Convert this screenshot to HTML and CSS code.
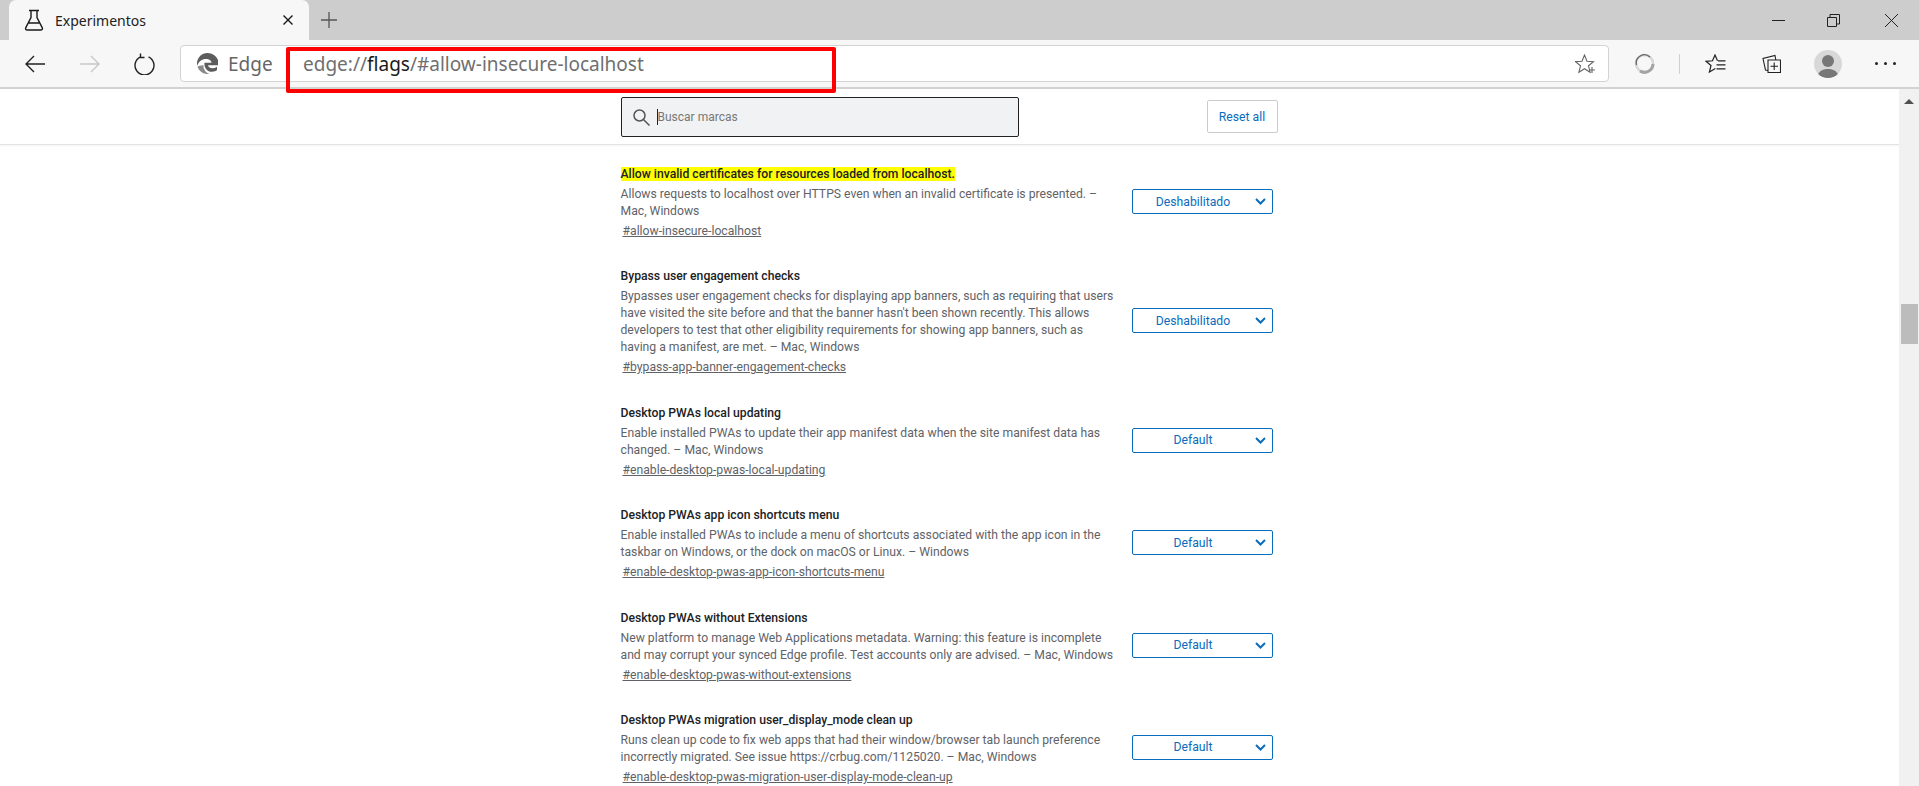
FILE: index.html
```html
<!DOCTYPE html>
<html lang="es">
<head>
<meta charset="utf-8">
<title>Experimentos</title>
<link rel="stylesheet" href="styles.css">
</head>
<body>
<div class="browser">
  <div class="tabstrip">
    <div class="tab">
      <svg class="flask" width="20" height="22" viewBox="0 0 20 22" fill="none" stroke="#1a1a1a" stroke-width="1.4"><path d="M5 1.500h10M7 1.500v7L1.800 18.600c-.7 1.300.1 2.400 1.400 2.400h13.600c1.300 0 2.100-1.100 1.400-2.400L13 8.500v-7M4.800 14h10.400"/></svg>
      <span class="tab-title">Experimentos</span>
      <svg class="tab-close" width="10" height="10" viewBox="0 0 10 10" stroke="#111" stroke-width="1.300"><path d="M.5.5l9 9M9.500.5l-9 9"/></svg>
    </div>
    <svg class="new-tab" width="16" height="16" viewBox="0 0 16 16" stroke="#555" stroke-width="1.300"><path d="M8 0v16M0 8h16"/></svg>
    <div class="win-controls">
      <svg class="win-min" width="13" height="13" viewBox="0 0 13 13" stroke="#222" stroke-width="1"><path d="M0 6.500h13"/></svg>
      <svg width="13" height="13" viewBox="0 0 13 13" fill="none" stroke="#222" stroke-width="1"><path d="M.5 3.500h9v9h-9zM3 3.500V.5h9.500v9.500h-3"/></svg>
      <svg width="13" height="13" viewBox="0 0 13 13" stroke="#222" stroke-width="1"><path d="M0 0l13 13M13 0L0 13"/></svg>
    </div>
  </div>

  <div class="toolbar">
    <svg class="nav back" width="20" height="18" viewBox="0 0 20 18" fill="none" stroke="#222" stroke-width="1.400"><path d="M20 9H1M9 1L1 9l8 8"/></svg>
    <svg class="nav forward" width="20" height="18" viewBox="0 0 20 18" fill="none" stroke="#c8c8c8" stroke-width="1.400"><path d="M0 9h19M11 1l8 8-8 8"/></svg>
    <svg class="nav reload" width="21" height="22" viewBox="0 0 21 22" fill="none" stroke="#222" stroke-width="1.400"><path d="M6.500 3.800A9.500 9.500 0 1 0 14.500 3.800M6.500 .5v4h4"/></svg>
    <div class="address">
      <svg class="edge-logo" width="21" height="21" viewBox="0 0 21 21"><path fill="#5d5d5d" d="M10.500 0C4.700 0 0 4.700 0 10.500c0 1 .1 1.700.3 2.300C1.500 8.500 5 6 9 6c3.200 0 5.500 1.700 5.500 3.800H7.500c-.6 4.500 2.500 9 7.500 9 2.300 0 4-.8 5-1.700v-3.300c-1.500 1-3 1.500-4.500 1.500-3 0-4.200-1.500-4.500-3h10.400c.2-.6.300-1.500.3-2.400C21 4.200 16.300 0 10.500 0z"/><path fill="#8a8a8a" d="M.5 13.500C1.700 17.800 5.700 21 10.500 21c.6 0 1.200 0 1.800-.2C8.500 19.500 6 15.800 6.500 12 3.500 12.500 1.500 13 .5 13.500z"/></svg>
      <span class="edge-label">Edge</span>
      <span class="url">edge://<b>flags</b>/#allow-insecure-localhost</span>
      <svg class="fav-add" width="21" height="20" viewBox="0 0 21 20" fill="none" stroke="#666" stroke-width="1.100"><path d="M9.500 1l2.500 6.200 6.500.4-5 4.200 1.600 6.400-5.600-3.500-5.600 3.500 1.600-6.400-5-4.200 6.500-.4z"/><path d="M17 13v6M14 16h6"/></svg>
    </div>
    <svg class="tool sync" width="21" height="21" viewBox="0 0 21 21" fill="none"><circle cx="10.500" cy="10.500" r="8.500" stroke="#d6d6d6" stroke-width="2.500"/><path d="M19 11a8.500 8.500 0 0 1-13 7" stroke="#a3a3a3" stroke-width="3"/><path d="M2.500 12A8.200 8.200 0 0 1 16 4" stroke="#666" stroke-width="1.300"/></svg>
    <span class="sep"></span>
    <svg class="tool favs" width="21" height="20" viewBox="0 0 21 20" fill="none" stroke="#222" stroke-width="1.200"><path d="M12.500 6.800L10 1 7.500 6.800 1 7.300l5 4.200L4.400 18l6-3.500"/><path d="M13 6.800h7.500M11.500 10.800h9M11.500 14.800h9"/></svg>
    <svg class="tool colls" width="19" height="20" viewBox="0 0 19 20" fill="none" stroke="#222" stroke-width="1.100"><path d="M6 18.500h12.500V6H6zM12.200 8.500v7.500M8.500 12.200H16"/><path d="M6 16.500L3.500 16 1 4.500 13 1.500l.8 4.500"/></svg>
    <div class="avatar"><svg width="28" height="28" viewBox="0 0 28 28"><circle cx="14" cy="11" r="6" fill="#777"/><path fill="#777" d="M3.500 26c1-4.500 5-7 10.500-7s9.500 2.500 10.500 7c-2.500 1.500-6.500 2-10.500 2s-8-.5-10.500-2z"/></svg></div>
    <div class="more"><i></i><i></i><i></i></div>
  </div>

  <div class="viewport">
    <main class="page">
      <header class="page-head">
        <div class="head-inner">
          <div class="search">
            <svg width="17" height="17" viewBox="0 0 17 17" fill="none" stroke="#555" stroke-width="1.500"><circle cx="6.500" cy="6.500" r="5.500"/><path d="M10.500 10.500l6 6"/></svg>
            <span class="caret"></span><span class="placeholder">Buscar marcas</span>
          </div>
          <button class="reset">Reset all</button>
        </div>
      </header>
      <section class="list">
        <article class="exp">
          <div class="exp-text">
            <h3><mark>Allow invalid certificates for resources loaded from localhost.</mark></h3>
            <p>Allows requests to localhost over HTTPS even when an invalid certificate is presented. – Mac, Windows</p>
            <a>#allow-insecure-localhost</a>
          </div>
          <div class="select">Deshabilitado<svg width="11" height="7" viewBox="0 0 11 7" fill="none" stroke="#0a6cbd" stroke-width="2"><path d="M1 1l4.500 4.500L10 1"/></svg></div>
        </article>
        <article class="exp">
          <div class="exp-text">
            <h3>Bypass user engagement checks</h3>
            <p>Bypasses user engagement checks for displaying app banners, such as requiring that users have visited the site before and that the banner hasn't been shown recently. This allows developers to test that other eligibility requirements for showing app banners, such as having a manifest, are met. – Mac, Windows</p>
            <a>#bypass-app-banner-engagement-checks</a>
          </div>
          <div class="select">Deshabilitado<svg width="11" height="7" viewBox="0 0 11 7" fill="none" stroke="#0a6cbd" stroke-width="2"><path d="M1 1l4.500 4.500L10 1"/></svg></div>
        </article>
        <article class="exp">
          <div class="exp-text">
            <h3>Desktop PWAs local updating</h3>
            <p>Enable installed PWAs to update their app manifest data when the site manifest data has changed. – Mac, Windows</p>
            <a>#enable-desktop-pwas-local-updating</a>
          </div>
          <div class="select">Default<svg width="11" height="7" viewBox="0 0 11 7" fill="none" stroke="#0a6cbd" stroke-width="2"><path d="M1 1l4.500 4.500L10 1"/></svg></div>
        </article>
        <article class="exp">
          <div class="exp-text">
            <h3>Desktop PWAs app icon shortcuts menu</h3>
            <p>Enable installed PWAs to include a menu of shortcuts associated with the app icon in the taskbar on Windows, or the dock on macOS or Linux. – Windows</p>
            <a>#enable-desktop-pwas-app-icon-shortcuts-menu</a>
          </div>
          <div class="select">Default<svg width="11" height="7" viewBox="0 0 11 7" fill="none" stroke="#0a6cbd" stroke-width="2"><path d="M1 1l4.500 4.500L10 1"/></svg></div>
        </article>
        <article class="exp">
          <div class="exp-text">
            <h3>Desktop PWAs without Extensions</h3>
            <p>New platform to manage Web Applications metadata. Warning: this feature is incomplete and may corrupt your synced Edge profile. Test accounts only are advised. – Mac, Windows</p>
            <a>#enable-desktop-pwas-without-extensions</a>
          </div>
          <div class="select">Default<svg width="11" height="7" viewBox="0 0 11 7" fill="none" stroke="#0a6cbd" stroke-width="2"><path d="M1 1l4.500 4.500L10 1"/></svg></div>
        </article>
        <article class="exp">
          <div class="exp-text">
            <h3>Desktop PWAs migration user_display_mode clean up</h3>
            <p>Runs clean up code to fix web apps that had their window/browser tab launch preference incorrectly migrated. See issue https://crbug.com/1125020. – Mac, Windows</p>
            <a>#enable-desktop-pwas-migration-user-display-mode-clean-up</a>
          </div>
          <div class="select">Default<svg width="11" height="7" viewBox="0 0 11 7" fill="none" stroke="#0a6cbd" stroke-width="2"><path d="M1 1l4.500 4.500L10 1"/></svg></div>
        </article>
      </section>
    </main>
    <div class="scrollbar"><span class="arrow"></span><span class="thumb"></span></div>
  </div>
  <div class="callout"></div>
</div>
</body>
</html>
```
FILE: styles.css
```css
* { box-sizing: border-box; }
html, body { margin: 0; height: 100%; overflow: hidden; }
body { font-family: Roboto, "Liberation Sans", sans-serif; background: #fff; color: #222; }
.browser { position: relative; height: 786px; display: flex; flex-direction: column; overflow: hidden; }

.tabstrip { height: 40px; flex: none; background: #cdcdcd; display: flex; align-items: center; padding-left: 9px; }
.tab { width: 300px; height: 40px; background: #f7f7f7; border-radius: 7px 7px 0 0; display: flex; align-items: center; padding-left: 15px; }
.flask { flex: none; }
.tab-title { margin-left: 11px; font: 14px "Noto Sans", "Open Sans", sans-serif; color: #222; flex: 1; }
.tab-close { margin-right: 16px; flex: none; }
.new-tab { margin-left: 12px; }
.win-controls { margin-left: auto; display: flex; gap: 45px; padding-right: 21px; align-items: center; }
.win-min { margin-right: -3px; }

.toolbar { height: 49px; flex: none; background: #f7f7f7; border-bottom: 2px solid #d2d2d2; display: flex; align-items: center; }
.nav { flex: none; }
.back { margin-left: 25px; }
.forward { margin-left: 35px; }
.reload { margin-left: 34px; }
.address { margin-left: 25px; width: 1429px; height: 37px; background: #fff; border: 1px solid #d3d3d3; border-radius: 4px; display: flex; align-items: center; padding-left: 16px; padding-right: 12px; }
.edge-logo { flex: none; }
.edge-label { margin-left: 10px; font: 19px "Noto Sans", "Open Sans", sans-serif; color: #666; width: 75px; flex: none; }
.url { font: 19px "Noto Sans", "Open Sans", sans-serif; color: #6f6f6f; flex: 1; white-space: nowrap; }
.url b { font-weight: 400; color: #1a1a1a; }
.fav-add { flex: none; }
.tool { flex: none; }
.sync { margin-left: 25px; }
.sep { width: 1px; height: 20px; background: #cfcfcf; margin-left: 24px; flex: none; }
.favs { margin-left: 25px; }
.colls { margin-left: 36px; }
.avatar { width: 28px; height: 28px; border-radius: 50%; background: #d8d8d8; margin-left: 33px; overflow: hidden; flex: none; }
.avatar svg { display: block; }
.more { margin-left: 33px; display: flex; gap: 6px; flex: none; }
.more i { width: 3px; height: 3px; border-radius: 50%; background: #222; display: block; }

.viewport { flex: 1; min-height: 0; display: flex; }
.page { flex: 1; min-width: 0; overflow: hidden; }
.page-head { height: 56px; border-bottom: 1px solid #e3e3e3; box-shadow: 0 1px 2px rgba(0,0,0,.05); }
.head-inner { width: 658px; margin: 0 auto; display: flex; align-items: flex-start; justify-content: space-between; }
.search { margin-top: 8px; width: 398px; height: 40px; background: #f1f2f3; border: 1px solid #222; border-radius: 2px; display: flex; align-items: center; padding-left: 11px; }
.caret { width: 1px; height: 16px; background: #222; margin-left: 7px; }
.placeholder { font-size: 12px; color: #777; }
.reset { width: 71px; height: 33px; background: #fff; border: 1px solid #ccc; border-radius: 2px; color: #0a6cbd; font: 400 12.200px Roboto, sans-serif; padding: 0; margin: 11px 1px 0 0; }

.list { width: 658px; margin: 0 auto; padding-top: 21px; }
.exp { display: flex; align-items: center; justify-content: space-between; padding-right: 6px; margin-bottom: 28.400px; }
.exp-text { width: 496px; }
.exp h3 { margin: 0; font-size: 12.200px; font-weight: 500; line-height: 17px; color: #202124; }
.exp mark { background: #ffff00; color: #202124; }
.exp p { margin: 3px 0 0; font-size: 12.200px; line-height: 17px; color: #5f6368; }
.exp a { display: inline-block; margin: 3px 0 0 2px; font-size: 12.200px; line-height: 17px; color: #5f6368; text-decoration: underline; }
.select { width: 141px; height: 25px; flex: none; margin-bottom: 3px; border: 1px solid #0a6cbd; border-radius: 2px; color: #0a6cbd; font-size: 12.200px; display: flex; align-items: center; justify-content: center; position: relative; padding-right: 18px; }
.select svg { position: absolute; right: 6px; top: 8px; }

.scrollbar { width: 20px; flex: none; background: #f1f1f1; position: relative; display: flex; flex-direction: column; align-items: center; }
.arrow { margin-top: 10px; width: 0; height: 0; border-left: 5px solid transparent; border-right: 5px solid transparent; border-bottom: 5px solid #505050; }
.thumb { margin-top: 200px; width: 17px; height: 40px; background: #bcbcbc; }

.callout { position: absolute; left: 286px; top: 47px; width: 550px; height: 46px; border: 4px solid #ff0000; border-radius: 2px; }
```
